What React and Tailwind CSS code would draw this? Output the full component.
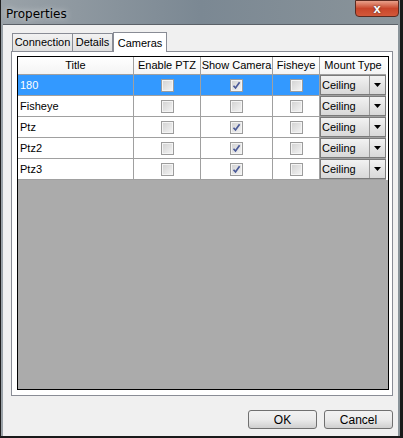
import React from 'react'

const rows = [
  { title: '180', ptz: false, show: true, fish: false, selected: true },
  { title: 'Fisheye', ptz: false, show: false, fish: false },
  { title: 'Ptz', ptz: false, show: true, fish: false },
  { title: 'Ptz2', ptz: false, show: true, fish: false },
  { title: 'Ptz3', ptz: false, show: true, fish: false },
]

function Check({ checked }) {
  return (
    <div className="w-[13px] h-[13px] border border-[#9c9c9c] bg-[#f4f4f4] p-[1px] flex items-center justify-center">
      <div className="w-full h-full bg-gradient-to-br from-[#d4d4d4] to-[#f2f2f2] flex items-center justify-center">
        {checked && (
          <svg width="9" height="9" viewBox="0 0 9 9">
            <path d="M1.5 4.8 L3.5 7 L7.6 1.2" fill="none" stroke="#4b5a98" strokeWidth="1.7" />
          </svg>
        )}
      </div>
    </div>
  )
}

function Cell({ children, className = '' }) {
  return (
    <div className={`h-[21px] border-r border-b border-[#a0a0a0] flex items-center justify-center ${className}`}>
      {children}
    </div>
  )
}

function Combo() {
  return (
    <div className="h-[21px] border-b border-[#a0a0a0] flex items-center">
      <div className="flex-1 h-[20px] flex border border-[#7a7a7a] bg-gradient-to-b from-[#f2f2f2] to-[#d8d8d8]">
        <div className="flex-1 flex items-center pl-[1px] text-[11px] text-black">Ceiling</div>
        <div className="w-[16px] border-l border-[#9a9a9a] flex items-center justify-center">
          <svg width="7" height="4" viewBox="0 0 7 4">
            <path d="M0 0 H7 L3.5 4 Z" fill="#000" />
          </svg>
        </div>
      </div>
    </div>
  )
}

export default function App() {
  return (
    <div className="w-[403px] h-[438px] flex flex-col bg-gradient-to-r from-[#9aa2a8] via-[#7b8893] to-[#8a949a] border-l border-[#202020] border-r-[3px] border-r-[#1a1a1a] border-b-[2px] border-b-[#1a1a1a]" style={{ fontFamily: '"Liberation Sans", Arial, sans-serif' }}>
      {/* title bar */}
      <div className="h-[24px] flex justify-between shrink-0">
        <div className="pl-[5px] pt-[5px] text-[12px] text-black" style={{ fontFamily: '"DejaVu Sans", "Liberation Sans", sans-serif', textShadow: '0 0 6px rgba(255,255,255,0.8)' }}>Properties</div>
        <div className="w-[44px] h-[17px] mr-[1px] rounded-b-[4px] border border-[#5a2a20] bg-gradient-to-b from-[#e8a08a] via-[#c8452a] to-[#d2583a] flex items-center justify-center">
          <span className="text-white font-bold text-[13px] leading-none" style={{ textShadow: '0 0 2px #333' }}>x</span>
        </div>
      </div>
      {/* client area */}
      <div className="flex-1 ml-[2px] mr-[2px] bg-[#f0f0f0] border-t border-[#5b6168] flex flex-col">
        <div className="ml-[8px] mr-[5px] mt-[6px] flex flex-col h-[365px]">
          {/* tabs */}
          <div className="flex items-end h-[20px] text-[11px] text-black">
            <div className="ml-[1px] w-[61px] h-[18px] border border-b-0 border-[#898c95] bg-gradient-to-b from-[#f2f2f2] to-[#e0e0e0] flex items-center justify-center">Connection</div>
            <div className="w-[40px] h-[18px] border border-b-0 border-l-0 border-[#898c95] bg-gradient-to-b from-[#f2f2f2] to-[#e0e0e0] flex items-center justify-center">Details</div>
            <div className="w-[54px] h-[20px] border border-b-0 border-[#898c95] bg-white -mb-[1px] relative z-10 flex items-start pt-[2px] justify-center">Cameras</div>
          </div>
          {/* panel */}
          <div className="flex-1 bg-white border border-[#898c95] pl-[5px] pt-[4px] pr-[3px] pb-[5px]">
            <div className="h-full border border-black bg-[#ababab] flex flex-col text-[11px] text-black">
              <div className="grid grid-cols-[116px_67px_72px_47px_66px] bg-white">
                <div className="h-[18px] border-r border-b border-[#a0a0a0] bg-gradient-to-b from-white to-[#f4f4f4] flex items-center justify-center">Title</div>
                <div className="h-[18px] border-r border-b border-[#a0a0a0] bg-gradient-to-b from-white to-[#f4f4f4] flex items-center justify-center">Enable PTZ</div>
                <div className="h-[18px] border-r border-b border-[#a0a0a0] bg-gradient-to-b from-white to-[#f4f4f4] flex items-center justify-center">Show Camera</div>
                <div className="h-[18px] border-r border-b border-[#a0a0a0] bg-gradient-to-b from-white to-[#f4f4f4] flex items-center justify-center">Fisheye</div>
                <div className="h-[18px] border-b border-[#a0a0a0] bg-gradient-to-b from-white to-[#f4f4f4] flex items-center justify-center">Mount Type</div>
                {rows.map((r) => (
                  <React.Fragment key={r.title}>
                    <Cell className={`justify-start pl-[2px] ${r.selected ? 'bg-[#3399ff] text-white' : ''}`}>{r.title}</Cell>
                    <Cell className={r.selected ? 'bg-[#3399ff]' : ''}><Check checked={r.ptz} /></Cell>
                    <Cell className={r.selected ? 'bg-[#3399ff]' : ''}><Check checked={r.show} /></Cell>
                    <Cell className={r.selected ? 'bg-[#3399ff]' : ''}><Check checked={r.fish} /></Cell>
                    <Combo />
                  </React.Fragment>
                ))}
              </div>
            </div>
          </div>
        </div>
        {/* buttons */}
        <div className="flex justify-end gap-[7px] mr-[5px] mt-[14px] text-[12px]">
          <button className="w-[69px] h-[19px] rounded-[3px] border border-[#707070] bg-gradient-to-b from-[#f2f2f2] via-[#ebebeb] to-[#cfcfcf] text-black leading-none">OK</button>
          <button className="w-[69px] h-[19px] rounded-[3px] border border-[#707070] bg-gradient-to-b from-[#f2f2f2] via-[#ebebeb] to-[#cfcfcf] text-black leading-none">Cancel</button>
        </div>
      </div>
    </div>
  )
}
